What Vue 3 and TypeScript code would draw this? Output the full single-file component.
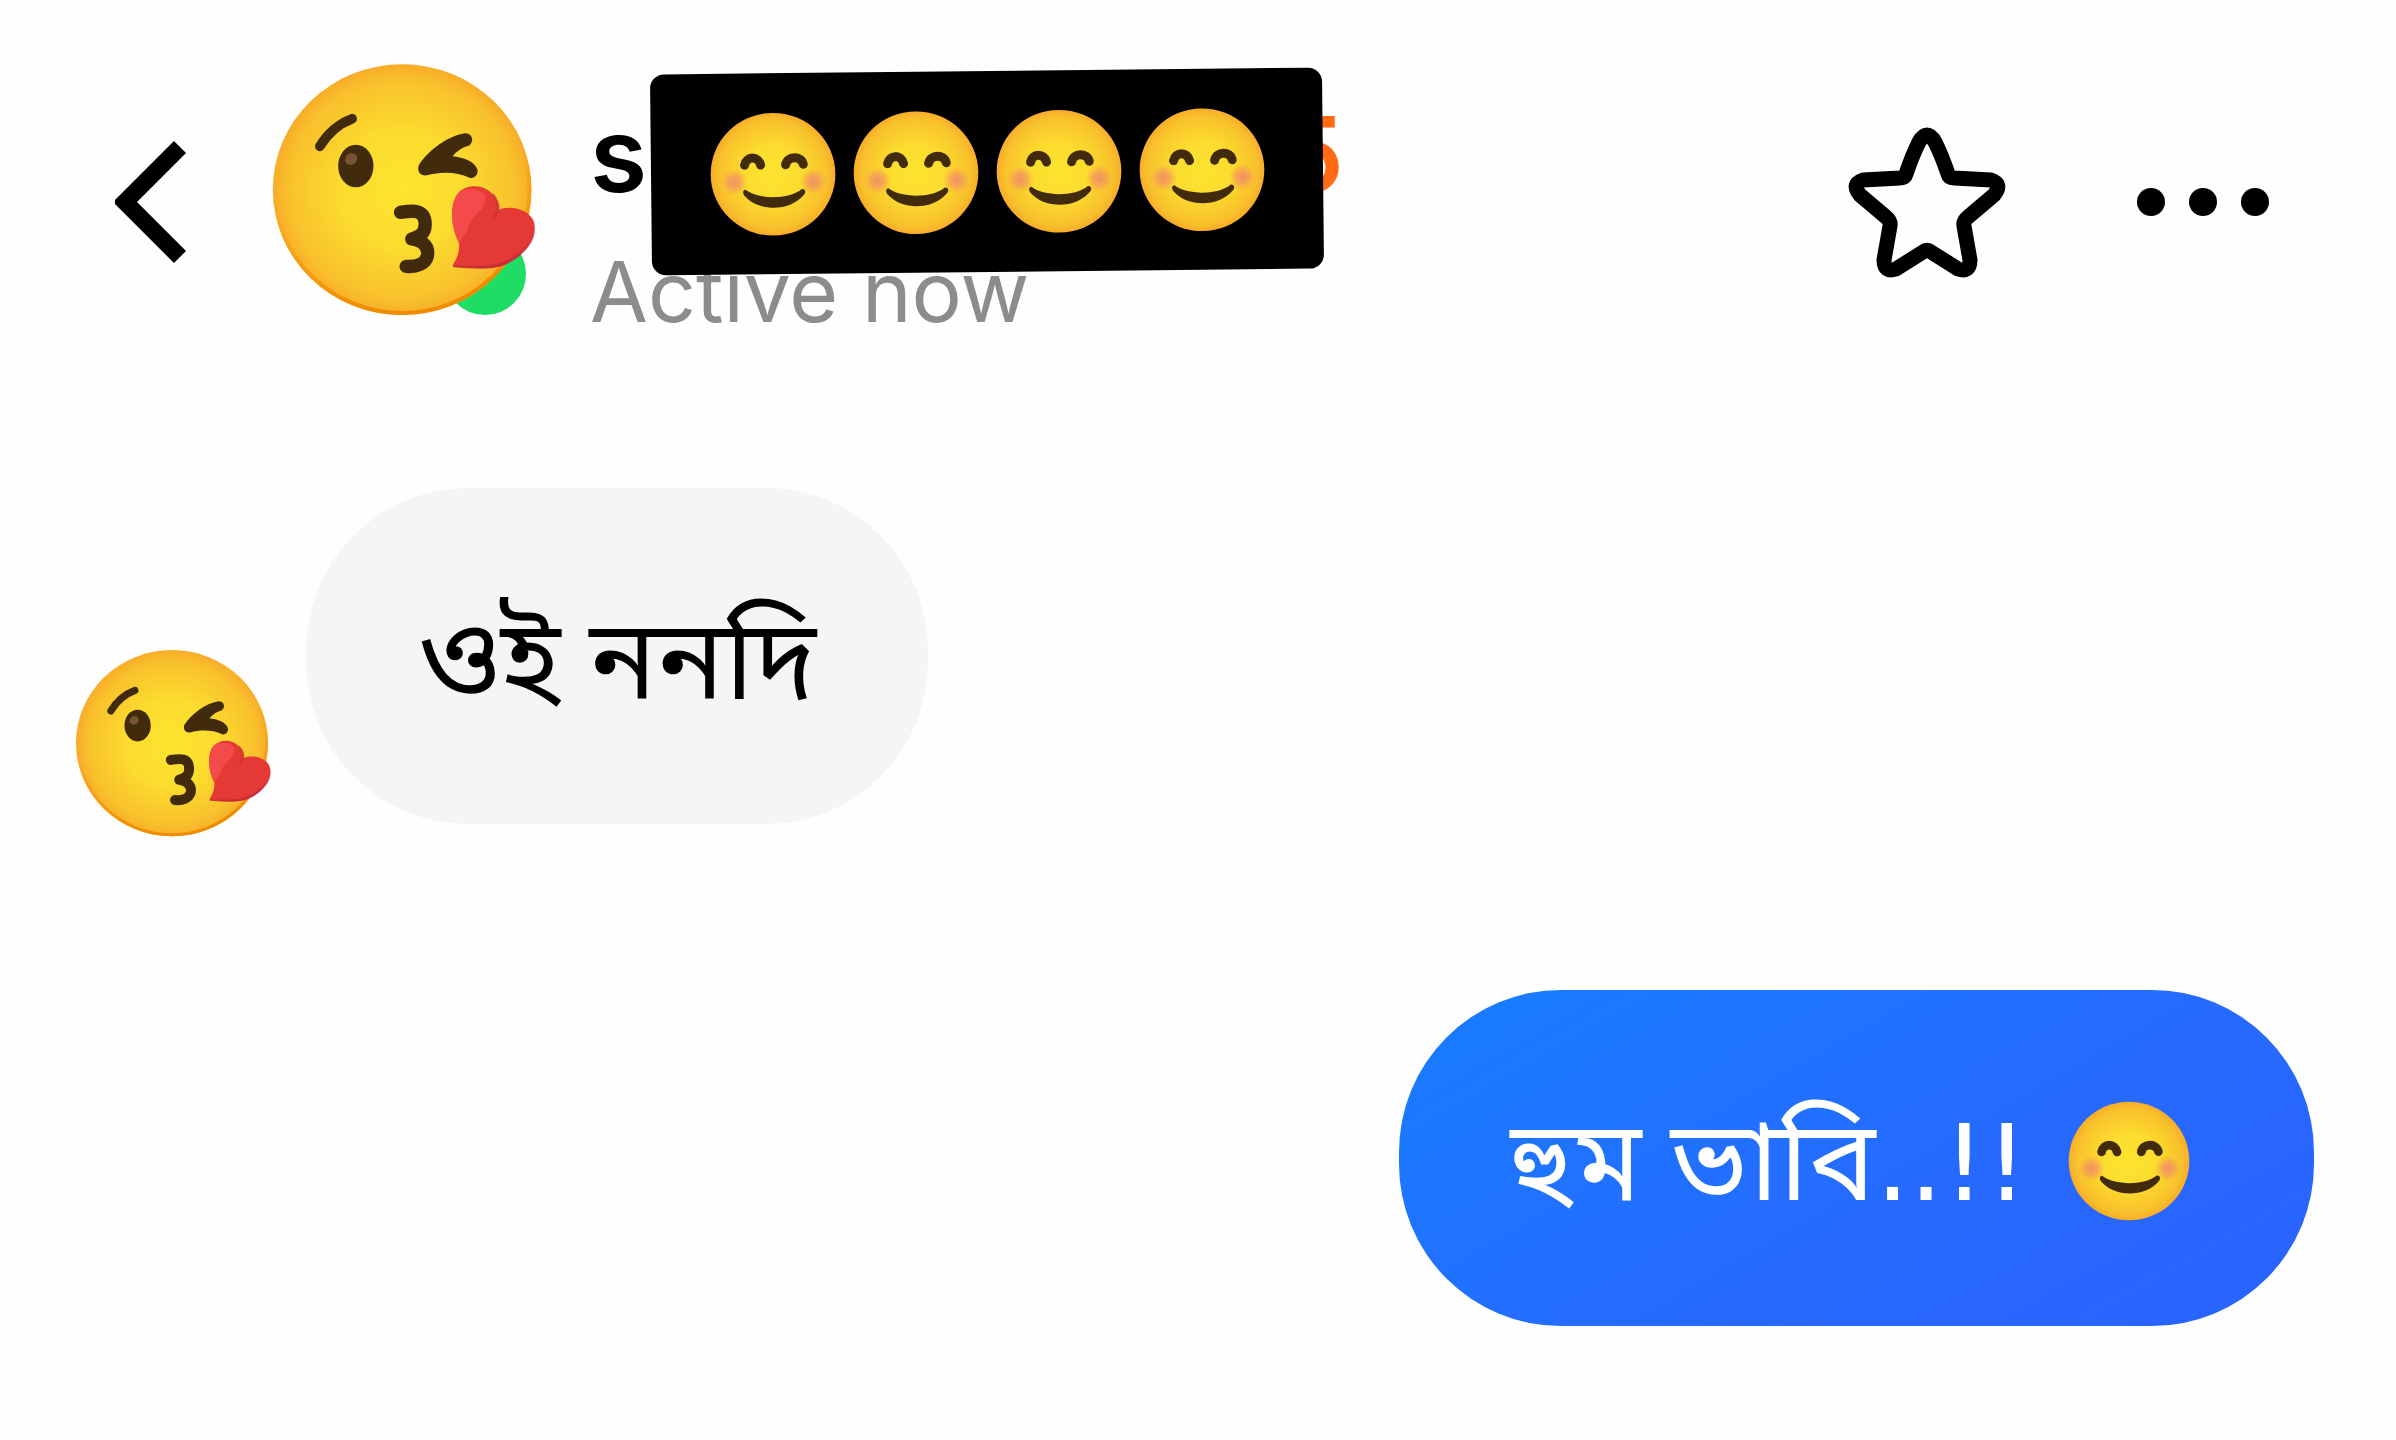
<script setup lang="ts">
interface Message {
  id: number
  mine: boolean
  text: string
  marks: string
  smile: boolean
}

const messages: Message[] = [
  { id: 1, mine: false, text: 'ওই ননদি', marks: '', smile: false },
  { id: 2, mine: true, text: 'হুম ভাবি', marks: '..!!', smile: true },
]
</script>

<template>
  <div class="chat">
    <!-- Shared emoji artwork -->
    <svg class="defs" width="0" height="0" aria-hidden="true">
      <defs>
        <radialGradient id="face-fill" cx="0.5" cy="0.5" r="0.52">
          <stop offset="0" stop-color="#fde42f" />
          <stop offset="0.45" stop-color="#fcdc2e" />
          <stop offset="0.85" stop-color="#f8c02c" />
          <stop offset="0.95" stop-color="#f8ae29" />
          <stop offset="1" stop-color="#f59a23" />
        </radialGradient>
        <radialGradient id="cheek-fill">
          <stop offset="0" stop-color="#f08a6c" stop-opacity="0.9" />
          <stop offset="0.5" stop-color="#f39462" stop-opacity="0.65" />
          <stop offset="1" stop-color="#f9b040" stop-opacity="0" />
        </radialGradient>
        <linearGradient id="rim-fill" x1="0" y1="0" x2="0.25" y2="1">
          <stop offset="0.5" stop-color="#f59a00" stop-opacity="0" />
          <stop offset="1" stop-color="#f08c00" />
        </linearGradient>
      </defs>
      <symbol id="kiss" viewBox="30 35 800 765">
        <ellipse cx="426" cy="418" rx="388" ry="376" fill="url(#face-fill)" />
        <ellipse cx="426" cy="418" rx="382" ry="370" fill="none" stroke="url(#rim-fill)" stroke-width="12" />
        <path d="M179 288Q215 228 276 205" fill="none" stroke="#422b0d" stroke-width="29" stroke-linecap="round" />
        <ellipse cx="287" cy="347" rx="53" ry="64" fill="#422b0d" />
        <ellipse cx="273" cy="326" rx="19" ry="17" fill="#785333" transform="rotate(-35 273 326)" />
        <path d="M614 249C560 258 505 300 476 344C470 364 480 377 500 375C540 364 590 364 628 382C642 386 654 374 652 358C644 334 610 321 577 318C592 300 610 289 626 286C644 274 637 249 614 249Z" fill="#422b0d" />
        <path d="M421 486C459 480 494 477 495 520C496 551 478 558 455 566C479 570 507 581 502 616C497 641 468 651 438 648" fill="none" stroke="#422b0d" stroke-width="40" stroke-linecap="round" stroke-linejoin="round" />
        <path d="M597 578C573 535 566 465 592 431C620 398 675 402 699 434C711 450 716 464 714 479C748 462 804 477 819 509C838 553 794 615 739 641C700 661 636 652 580 650C572 640 599 629 597 578Z" fill="#e53935" />
        <path d="M597 578C573 535 566 465 592 431C620 406 661 412 676 438C680 486 628 490 622 544C614 552 604 562 597 578Z" fill="#ff5a5f" opacity="0.55" />
        <path d="M580 645C640 648 705 651 749 625C795 600 824 565 823 526C831 573 790 618 739 641C700 661 636 656 578 650Z" fill="#bd2a38" opacity="0.7" />
        <path d="M699 434C712 450 716 466 714 479L702 500" fill="none" stroke="#c62f36" stroke-width="8" stroke-linecap="round" opacity="0.7" />
      </symbol>
      <symbol id="smile" viewBox="95 68 378 372">
        <ellipse cx="284" cy="254" rx="187" ry="184" fill="url(#face-fill)" />
        <circle cx="168" cy="277" r="42" fill="url(#cheek-fill)" />
        <circle cx="405" cy="277" r="42" fill="url(#cheek-fill)" />
        <path d="M199 226C205 198 240 198 247 226M322 226C328 198 369 198 375 225" fill="none" stroke="#422b0d" stroke-width="27" stroke-linecap="round" />
        <path d="M201 300C238 330 333 331 370 299C379 298 384 307 377 316C334 368 238 367 197 317C191 308 194 300 201 300Z" fill="#422b0d" />
      </symbol>
    </svg>

    <header class="top">
      <button class="icon-button back" type="button" aria-label="Back">
        <svg width="72" height="124" viewBox="0 0 72 124">
          <path d="M65 7L10 62L65 117" fill="none" stroke="#000" stroke-width="17" />
        </svg>
      </button>

      <div class="avatar large">
        <span class="online"></span>
        <svg class="face" role="img" aria-label="Face blowing a kiss"><use href="#kiss" /></svg>
      </div>

      <div class="who">
        <h1 class="name">
          <span>s</span>
          <span class="streak">5</span>
        </h1>
        <p class="status">Active now</p>
        <div class="cover">
          <svg v-for="n in 4" :key="n" class="smile" role="img" aria-label="Smiling face"><use href="#smile" /></svg>
        </div>
      </div>

      <div class="actions">
        <button class="icon-button" type="button" aria-label="Favourite">
          <svg width="160" height="160" viewBox="0 0 160 160">
            <path
              d="M72 20Q80 6 88 20Q95 34 101 52Q102 56 107 56L144 58Q156 62 147 73L121 95Q116 99 117 104L123 138Q123 151 111 147L84 130Q80 127 76 130L49 147Q37 151 37 138L43 104Q44 99 39 95L13 73Q4 62 16 58L53 56Q58 56 59 52Q65 34 72 20Z"
              fill="none" stroke="#000" stroke-width="15" stroke-linejoin="round"
            />
          </svg>
        </button>
        <button class="icon-button" type="button" aria-label="More options">
          <svg width="132" height="28" viewBox="0 0 132 28">
            <circle cx="14" cy="14" r="14" />
            <circle cx="66" cy="14" r="14" />
            <circle cx="118" cy="14" r="14" />
          </svg>
        </button>
      </div>
    </header>

    <main class="thread">
      <div v-for="m in messages" :key="m.id" class="row" :class="{ mine: m.mine }">
        <div v-if="!m.mine" class="avatar small">
          <svg class="face" role="img" aria-label="Face blowing a kiss"><use href="#kiss" /></svg>
        </div>
        <p class="bubble">
          <span>{{ m.text }}<span v-if="m.marks" class="marks">{{ m.marks }}</span></span>
          <svg v-if="m.smile" class="smile" role="img" aria-label="Smiling face"><use href="#smile" /></svg>
        </p>
      </div>
    </main>
  </div>
</template>

<style>
body {
  margin: 0;
  background: #fefefe;
}
</style>

<style scoped>
.chat {
  min-height: 100vh;
  box-sizing: border-box;
  background: #fefefe;
  color: #000;
  font-family: Inter, sans-serif;
}

.defs {
  position: absolute;
}

.top {
  display: flex;
  align-items: flex-start;
  padding: 62px 127px 0 115px;
}

.icon-button {
  display: block;
  padding: 0;
  border: 0;
  background: none;
  color: inherit;
}

.icon-button svg {
  display: block;
}

.back {
  margin: 78px 83px 0 0;
}

.avatar {
  position: relative;
  flex: none;
}

.avatar .face {
  position: relative;
  display: block;
  width: 100%;
  height: 100%;
}

.large {
  width: 267px;
  height: 255px;
  margin-right: 53px;
}

.small {
  width: 198px;
  height: 190px;
}

.online {
  position: absolute;
  right: 11px;
  bottom: 2px;
  width: 82px;
  height: 82px;
  border-radius: 50%;
  background: #1edc64;
}

.who {
  position: relative;
  width: 754px;
}

.name {
  display: flex;
  justify-content: space-between;
  margin: 22px 0 0;
  font-size: 104px;
  line-height: 140px;
  font-weight: 600;
}

.streak {
  color: #ff6a13;
}

.status {
  margin: 10px 0 0;
  font-size: 84px;
  line-height: 116px;
  color: #8c8c8c;
}

.cover {
  position: absolute;
  top: 9px;
  left: 61px;
  display: flex;
  align-items: center;
  justify-content: center;
  gap: 17px;
  width: 672px;
  height: 201px;
  border-radius: 14px;
  background: #000;
  transform: rotate(-0.6deg);
}

.smile {
  flex: none;
  width: 126px;
  height: 124px;
}

.actions {
  display: flex;
  align-items: center;
  gap: 130px;
  margin: 60px 0 0 auto;
}

.thread {
  padding: 138px 82px 0 74px;
}

.row {
  display: flex;
  align-items: flex-end;
  gap: 34px;
}

.bubble {
  display: flex;
  align-items: center;
  gap: 40px;
  box-sizing: border-box;
  height: 336px;
  margin: 0 0 14px;
  padding: 0 112px;
  border-radius: 162px;
  background: #f5f5f5;
  font-family: "Noto Sans", "Noto Sans Bengali", sans-serif;
  font-size: 112px;
  line-height: 140px;
  white-space: nowrap;
}

.marks {
  font-family: "DejaVu Sans", sans-serif;
  font-size: 106px;
}

.mine {
  justify-content: flex-end;
  margin-top: 152px;
}

.mine .bubble {
  padding: 5px 124px 0 112px;
  background: linear-gradient(150deg, #187cff 5%, #2769ff 60%, #2a62ff);
  color: #fff;
}

.bubble .smile {
  width: 122px;
  height: 120px;
}
</style>
